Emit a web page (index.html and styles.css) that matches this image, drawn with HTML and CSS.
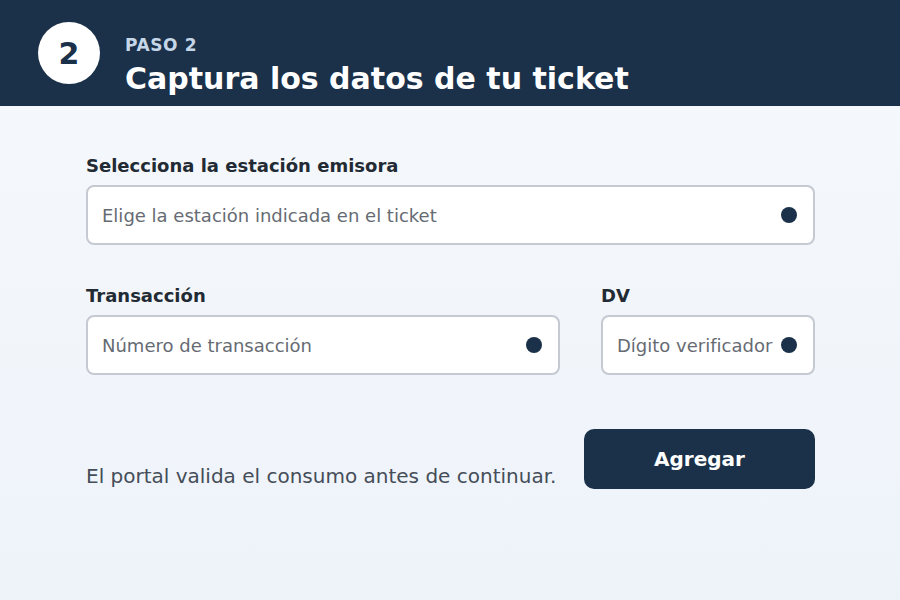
FILE: index.html
```html
<!DOCTYPE html>
<html lang="es">
<head>
	<meta charset="UTF-8">
	<title>Paso 2</title>
	<link rel="stylesheet" href="styles.css">
</head>
<body>
	<header class="header">
		<div class="step">2</div>
		<div class="headTxt">
			<div class="kicker">PASO 2</div>
			<h1 class="title">Captura los datos de tu ticket</h1>
		</div>
	</header>
	<section class="main">
		<div class="field">
			<label class="label">Selecciona la estación emisora</label>
			<div class="input">
				<span class="ph">Elige la estación indicada en el ticket</span>
				<span class="dot"></span>
			</div>
		</div>
		<div class="row">
			<div class="field grow">
				<label class="label">Transacción</label>
				<div class="input">
					<span class="ph">Número de transacción</span>
					<span class="dot"></span>
				</div>
			</div>
			<div class="field dv">
				<label class="label">DV</label>
				<div class="input">
					<span class="ph">Dígito verificador</span>
					<span class="dot"></span>
				</div>
			</div>
		</div>
		<div class="foot">
			<p class="note">El portal valida el consumo antes de continuar.</p>
			<button class="btn">Agregar</button>
		</div>
	</section>
</body>
</html>
```

FILE: styles.css
```css
html,body{
	margin:0;
	height:100%;
}
body{
	font-family:"DejaVu Sans","Noto Sans",sans-serif;
	background:linear-gradient(#f6f9fc,#eef3fa);
	color:#222a33;
}
.header{
	display:flex;
	align-items:center;
	height:106px;
	padding-left:38px;
	box-sizing:border-box;
	background:#1b3149;
}
.step{
	width:62px;
	height:62px;
	border-radius:50%;
	background:#fff;
	color:#1b3149;
	font-size:30px;
	font-weight:bold;
	display:flex;
	align-items:center;
	justify-content:center;
}
.headTxt{
	margin-left:25px;
	padding-top:26px;
}
.kicker{
	color:#c5d6e8;
	font-size:17px;
	line-height:20px;
	font-weight:bold;
	letter-spacing:0.6px;
}
.title{
	margin:6px 0 0;
	color:#fff;
	font-size:30px;
	line-height:36px;
	font-weight:bold;
}
.main{
	padding:49px 85px 0 86px;
}
.field{
	display:flex;
	flex-direction:column;
}
.label{
	font-size:18px;
	line-height:22px;
	font-weight:bold;
	color:#222a33;
	margin-bottom:8px;
}
.input{
	display:flex;
	align-items:center;
	justify-content:space-between;
	height:60px;
	padding:0 16px 0 14px;
	box-sizing:border-box;
	background:#fff;
	border:2px solid #c5c9d2;
	border-radius:8px;
}
.ph{
	font-size:18px;
	color:#666b73;
}
.dot{
	width:16px;
	height:16px;
	border-radius:50%;
	background:#1b3149;
}
.row{
	display:flex;
	gap:41px;
	margin-top:40px;
}
.grow{
	flex:1;
}
.dv{
	width:214px;
}
.foot{
	display:flex;
	justify-content:space-between;
	align-items:flex-end;
	margin-top:54px;
}
.note{
	margin:0 0 1px;
	font-size:20px;
	line-height:24px;
	color:#454d58;
}
.btn{
	width:231px;
	height:60px;
	border:none;
	border-radius:10px;
	background:#1b3149;
	color:#fff;
	font-family:inherit;
	font-size:20px;
	font-weight:bold;
}
```
